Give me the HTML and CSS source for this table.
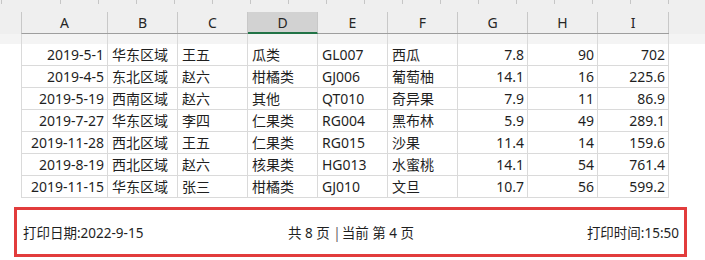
FILE: index.html
```html
<!DOCTYPE html>
<html lang="zh-CN">
    <head>
        <meta charset="UTF-8" />
        <meta name="viewport" content="width=device-width, initial-scale=1.0" />
        <title>打印预览</title>
        <link rel="stylesheet" href="styles.css">
    </head>
    <body>
        <div class="sheet">
            <div class="sheet-head">
                <div class="ruler"></div>
                <div class="grid col-heads">
                    <div class="col-head">A</div>
                    <div class="col-head">B</div>
                    <div class="col-head">C</div>
                    <div class="col-head active">D</div>
                    <div class="col-head">E</div>
                    <div class="col-head">F</div>
                    <div class="col-head">G</div>
                    <div class="col-head">H</div>
                    <div class="col-head">I</div>
                </div>
            </div>

            <div class="freeze-gap">
                <div class="grid">
                    <div></div><div></div><div></div><div></div><div></div>
                    <div></div><div></div><div></div><div></div>
                </div>
            </div>

            <div class="grid rows">
                <div class="num">2019-5-1</div><div>华东区域</div><div>王五</div><div>瓜类</div><div>GL007</div><div>西瓜</div><div class="num">7.8</div><div class="num">90</div><div class="num">702</div>
                <div class="num">2019-4-5</div><div>东北区域</div><div>赵六</div><div>柑橘类</div><div>GJ006</div><div>葡萄柚</div><div class="num">14.1</div><div class="num">16</div><div class="num">225.6</div>
                <div class="num">2019-5-19</div><div>西南区域</div><div>赵六</div><div>其他</div><div>QT010</div><div>奇异果</div><div class="num">7.9</div><div class="num">11</div><div class="num">86.9</div>
                <div class="num">2019-7-27</div><div>华东区域</div><div>李四</div><div>仁果类</div><div>RG004</div><div>黑布林</div><div class="num">5.9</div><div class="num">49</div><div class="num">289.1</div>
                <div class="num">2019-11-28</div><div>西北区域</div><div>王五</div><div>仁果类</div><div>RG015</div><div>沙果</div><div class="num">11.4</div><div class="num">14</div><div class="num">159.6</div>
                <div class="num">2019-8-19</div><div>西北区域</div><div>赵六</div><div>核果类</div><div>HG013</div><div>水蜜桃</div><div class="num">14.1</div><div class="num">54</div><div class="num">761.4</div>
                <div class="num">2019-11-15</div><div>华东区域</div><div>张三</div><div>柑橘类</div><div>GJ010</div><div>文旦</div><div class="num">10.7</div><div class="num">56</div><div class="num">599.2</div>
            </div>
        </div>

        <div class="print-footer">
            <span class="foot-left">打印日期:2022-9-15</span>
            <span class="foot-mid">共 8 页 <span class="sep">|</span>当前 第 4 页</span>
            <span class="foot-right">打印时间:15:50</span>
        </div>
    </body>
</html>
```

FILE: styles.css
```css
* {
    box-sizing: border-box;
}

body {
    margin: 0;
    background: #fff;
    color: #1f1f1f;
    font-family: "Noto Sans", "Noto Sans CJK SC", sans-serif;
    font-size: 14px;
}

/* column letters band */
.sheet-head {
    background: #efefef;
}

.ruler {
    height: 4px;
    margin-bottom: 8px;
    background: repeating-linear-gradient(to right, transparent 0 37px, #c6c6c6 37px 38px);
    background-position: 23px 0;
}

.grid {
    display: grid;
    grid-template-columns: 86px repeat(7, 70px) 71px;
    margin-left: 21px;
    width: 648px;
    border-left: 1px solid #c8c8c8;
}

.col-heads {
    height: 22px;
    border-bottom: 1px solid #9e9e9e;
}

.col-head {
    display: flex;
    justify-content: center;
    align-items: center;
    border-right: 1px solid #c8c8c8;
    color: #262626;
}

.col-head.active {
    background: #d2d2d2;
    border-bottom: 2px solid #217346;
    margin-bottom: -1px;
}

/* empty band between the headers and the rows */
.freeze-gap {
    background: #f4f4f4;
}

.freeze-gap .grid {
    height: 10px;
    border-left-color: #dadada;
}

.freeze-gap .grid div {
    border-right: 1px solid #dadada;
}

.rows {
    border-left-color: #dadada;
}

.rows div {
    height: 22px;
    line-height: 21px;
    padding: 0 4px;
    border-right: 1px solid #dadada;
    border-bottom: 1px solid #dadada;
    white-space: nowrap;
}

.rows .num {
    text-align: right;
    padding-right: 3px;
}

.print-footer {
    display: grid;
    grid-template-columns: 1fr auto 1fr;
    align-items: center;
    margin: 9px 0 0 14px;
    width: 673px;
    height: 50px;
    padding: 0 5px 0 6px;
    border: 3px solid #e23c3c;
    font-size: 13.5px;
}

.foot-mid .sep {
    color: #666;
    margin-right: 1px;
}

.foot-right {
    text-align: right;
}
```
